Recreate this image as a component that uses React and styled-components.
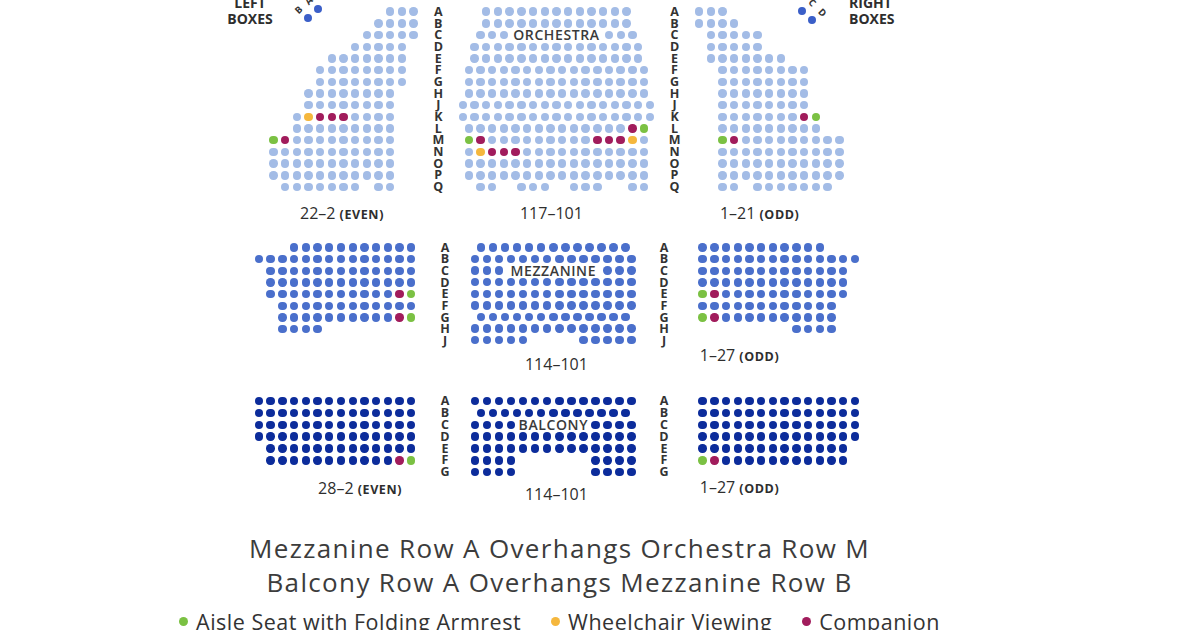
import React from "react";
import styled, { createGlobalStyle } from "styled-components";

const GlobalStyle = createGlobalStyle`
  html, body {
    margin: 0;
    padding: 0;
    background: #fff;
  }
  body {
    font-family: "Open Sans", "Liberation Sans", sans-serif;
    color: #333;
  }
`;

const TONES = { light: "#a3bce6", mid: "#4a6fcb", dark: "#0c2c9b" };
const SPECIAL = { g: "#7bc143", p: "#a11c5c", y: "#f5b73d" };

// "3o2." -> "ooo.."  ('.' empty seat, ',' half gap, '#' section name)
const parse = (s) => s.replace(/(\d+)([.o#gpy])/g, (_, n, c) => c.repeat(+n));

const orchestra = {
  left: ["10.3o", "9.4o", "8.5o", "7.5o1.", "5.7o1.", "4.8o1.", "4.8o1.", "3.8o2.", "3.8o2.", "2.oyppp4o2.", "2.9o2.", "gp9o2.", "11o2.", "11o2.", "11o2.", ".7o.2o2."],
  center: ["13o", "13o", "3o8#3o", "15o", "15o", "16o", "16o", "16o", "17o", "17o", "14opg", "gp9o3pyo", "oy3p11o", "16o", "16o", ".2o.,3o.,3o2.2o"],
  right: ["3o10.", "4o9.", ".5o7.", ".5o7.", ".7o5.", "2.8o3.", "2.8o3.", "2.8o3.", "2.8o3.", "2.7opg2.", "2.9o2.", "2.gp9o", "2.11o", "2.11o", "2.11o", "2.2o.7o."],
};

const mezzanine = {
  left: ["3.11o", "14o", ".13o", ".13o", ".11opg", "2.12o", "2.10opg", "2.4o8."],
  center: ["13o", "14o", "3o8#3o", "14o", "14o", "14o", "13o", "14o", "5o4.5o"],
  right: ["11o3.", "14o", "13o.", "13o.", "gp11o.", "12o2.", "gp10o2.", "8.4o2."],
};

const balcony = {
  left: ["14o", "14o", "14o", "14o", ".13o", ".11opg"],
  center: ["14o", "13o", "4o6#4o", "14o", "14o", "4o6.4o", "4o6.4o"],
  right: ["14o", "14o", "14o", "14o", "13o.", "gp11o."],
};

const Chart = styled.div`
  width: 1200px;
  height: 630px;
  overflow: hidden;
  box-sizing: border-box;
  padding-top: 5.85px;
  display: flex;
  flex-direction: column;
  background: #fff;
`;

const Tier = styled.div`
  position: relative;
  display: flex;
  align-items: flex-start;
  height: ${(p) => p.$h}px;
  flex-shrink: 0;
`;

const Section = styled.div`
  display: flex;
  flex-direction: column;
  flex-shrink: 0;
  width: ${(p) => p.$w}px;
  margin-left: ${(p) => p.$ml}px;
`;

const SeatRow = styled.div`
  display: flex;
  align-items: center;
  justify-content: ${(p) => (p.$center ? "center" : "flex-start")};
  height: ${(p) => p.$h}px;
`;

const Gap = styled.span`
  width: ${(p) => p.$w}px;
  flex-shrink: 0;
`;

const Seat = styled.span`
  width: ${(p) => p.$w}px;
  height: 100%;
  flex-shrink: 0;
  display: flex;
  align-items: center;
  justify-content: center;

  &::after {
    content: "";
    width: 8.4px;
    height: 8.4px;
    border-radius: 50%;
    background: ${(p) => p.$color};
  }
`;

const SectionName = styled.span`
  width: ${(p) => p.$w}px;
  flex-shrink: 0;
  text-align: center;
  font-size: 14px;
  font-weight: 600;
  letter-spacing: 0.6px;
  color: #3a3a3a;
  line-height: 1;
  white-space: nowrap;
`;

const Range = styled.div`
  margin-top: ${(p) => p.$mt}px;
  padding-left: ${(p) => p.$pl}px;
  height: 18px;
  line-height: 18px;
  font-size: 16px;
  font-weight: 500;
  color: #2e2e2e;
  white-space: nowrap;

  small {
    font-size: 12.5px;
    font-weight: 700;
    letter-spacing: 0.6px;
  }
`;

const Letters = styled.div`
  display: flex;
  flex-direction: column;
  flex-shrink: 0;
  width: 14px;
  margin-left: ${(p) => p.$ml}px;
`;

const Letter = styled.span`
  height: ${(p) => p.$h}px;
  line-height: ${(p) => p.$h}px;
  text-align: center;
  font-size: 12.5px;
  font-weight: 700;
  color: #333;
`;

const BoxTag = styled.div`
  position: absolute;
  top: -10.75px;
  left: ${(p) => p.$left}px;
  width: ${(p) => p.$w}px;
  text-align: ${(p) => p.$align};
  font-size: 14px;
  font-weight: 700;
  line-height: 16px;
  color: #2e2e2e;
`;

const BoxSeat = styled.span`
  position: absolute;
  left: ${(p) => p.$x - 3.9}px;
  top: ${(p) => p.$y - 3.9}px;
  width: 7.8px;
  height: 7.8px;
  border-radius: 50%;
  background: #3b5fc8;
`;

const BoxLetter = styled.span`
  position: absolute;
  left: ${(p) => p.$x - 4}px;
  top: ${(p) => p.$y - 5}px;
  width: 8px;
  height: 10px;
  line-height: 10px;
  text-align: center;
  font-size: 9.5px;
  font-weight: 700;
  color: #333;
  transform: rotate(${(p) => p.$rot}deg);
`;

const Footer = styled.div`
  width: 1119px;
  text-align: center;
`;

const Note = styled.div`
  font-size: 26px;
  line-height: 34px;
  color: #3c3c3c;
  letter-spacing: 1.35px;
  white-space: nowrap;
`;

const Legend = styled.div`
  display: flex;
  justify-content: center;
  gap: 30px;
  margin-top: 13px;
  font-size: 21.5px;
  line-height: 20px;
  letter-spacing: 0.5px;
  color: #333;
  white-space: nowrap;
`;

const LegendItem = styled.span`
  display: flex;
  align-items: center;
  gap: 8px;

  &::before {
    content: "";
    width: 9px;
    height: 9px;
    border-radius: 50%;
    background: ${(p) => p.$color};
  }
`;

function SeatLine({ pattern, tone, cw, ch, center, name }) {
  const chars = parse(pattern).split("");
  const out = [];
  let i = 0;
  while (i < chars.length) {
    const c = chars[i];
    if (c === "#") {
      let n = 0;
      while (chars[i] === "#") {
        n++;
        i++;
      }
      out.push(
        <SectionName key={i} $w={n * cw}>
          {name}
        </SectionName>
      );
      continue;
    }
    if (c === ".") out.push(<Gap key={i} $w={cw} />);
    else if (c === ",") out.push(<Gap key={i} $w={cw / 2} />);
    else out.push(<Seat key={i} $w={cw} $color={SPECIAL[c] || TONES[tone]} />);
    i++;
  }
  return (
    <SeatRow $h={ch} $center={center}>
      {out}
    </SeatRow>
  );
}

function Block({ rows, cols, cw, ch, ml, tone, center, name, range }) {
  return (
    <Section $w={cols * cw} $ml={ml}>
      {rows.map((r, i) => (
        <SeatLine key={i} pattern={r} tone={tone} cw={cw} ch={ch} center={center} name={name} />
      ))}
      {range && (
        <Range $pl={range.pl} $mt={range.mt}>
          {range.num} {range.note && <small>{range.note}</small>}
        </Range>
      )}
    </Section>
  );
}

function RowLetters({ letters, ch, ml }) {
  return (
    <Letters $ml={ml}>
      {letters.split("").map((l) => (
        <Letter key={l} $h={ch}>
          {l}
        </Letter>
      ))}
    </Letters>
  );
}

export default function App() {
  return (
    <>
      <GlobalStyle />
      <Chart>
        <Tier $h={235.75}>
          <BoxTag $left={220} $w={60} $align="center">
            LEFT
            <br />
            BOXES
          </BoxTag>
          <BoxLetter $x={309} $y={-4.8} $rot={-45}>A</BoxLetter>
          <BoxLetter $x={299} $y={4.2} $rot={-45}>B</BoxLetter>
          <BoxSeat $x={318} $y={3.2} />
          <BoxSeat $x={308} $y={12.2} />

          <BoxSeat $x={801.7} $y={5.2} />
          <BoxSeat $x={811.7} $y={14.2} />
          <BoxLetter $x={812} $y={-2.8} $rot={45}>C</BoxLetter>
          <BoxLetter $x={822} $y={7.2} $rot={45}>D</BoxLetter>
          <BoxTag $left={849} $w={70} $align="left">
            RIGHT
            <br />
            BOXES
          </BoxTag>

          <Block rows={orchestra.left} cols={13} cw={11.7} ch={11.7} ml={267.5} tone="light" range={{ num: "22–2", note: "(EVEN)", pl: 32.5, mt: 11 }} />
          <RowLetters letters="ABCDEFGHJKLMNOPQ" ch={11.7} ml={11.7} />
          <Block rows={orchestra.center} cols={17} cw={11.7} ch={11.7} ml={11.7} tone="light" center name="ORCHESTRA" range={{ num: "117–101", pl: 63, mt: 11 }} />
          <RowLetters letters="ABCDEFGHJKLMNOPQ" ch={11.7} ml={11.7} />
          <Block rows={orchestra.right} cols={13} cw={11.7} ch={11.7} ml={11.7} tone="light" range={{ num: "1–21", note: "(ODD)", pl: 26.7, mt: 11 }} />
        </Tier>

        <Tier $h={153.4}>
          <Block rows={mezzanine.left} cols={14} cw={11.72} ch={11.7} ml={253.1} tone="mid" />
          <RowLetters letters="ABCDEFGHJ" ch={11.7} ml={20.8} />
          <Block rows={mezzanine.center} cols={14} cw={12.05} ch={11.6} ml={17} tone="mid" center name="MEZZANINE" range={{ num: "114–101", pl: 56, mt: 9 }} />
          <RowLetters letters="ABCDEFGHJ" ch={11.7} ml={19.3} />
          <Block rows={mezzanine.right} cols={14} cw={11.72} ch={11.7} ml={25.8} tone="mid" range={{ num: "1–27", note: "(ODD)", pl: 3, mt: 11 }} />
        </Tier>

        <Tier $h={136}>
          <Block rows={balcony.left} cols={14} cw={11.72} ch={11.9} ml={253.1} tone="dark" range={{ num: "28–2", note: "(EVEN)", pl: 65, mt: 12.5 }} />
          <RowLetters letters="ABCDEFG" ch={11.9} ml={20.8} />
          <Block rows={balcony.center} cols={14} cw={12.05} ch={11.9} ml={17} tone="dark" center name="BALCONY" range={{ num: "114–101", pl: 56, mt: 7 }} />
          <RowLetters letters="ABCDEFG" ch={11.9} ml={19.3} />
          <Block rows={balcony.right} cols={14} cw={11.72} ch={11.9} ml={25.8} tone="dark" range={{ num: "1–27", note: "(ODD)", pl: 3, mt: 11.5 }} />
        </Tier>

        <Footer>
          <Note>Mezzanine Row A Overhangs Orchestra Row M</Note>
          <Note>Balcony Row A Overhangs Mezzanine Row B</Note>
          <Legend>
            <LegendItem $color={SPECIAL.g}>Aisle Seat with Folding Armrest</LegendItem>
            <LegendItem $color={SPECIAL.y}>Wheelchair Viewing</LegendItem>
            <LegendItem $color={SPECIAL.p}>Companion</LegendItem>
          </Legend>
        </Footer>
      </Chart>
    </>
  );
}
